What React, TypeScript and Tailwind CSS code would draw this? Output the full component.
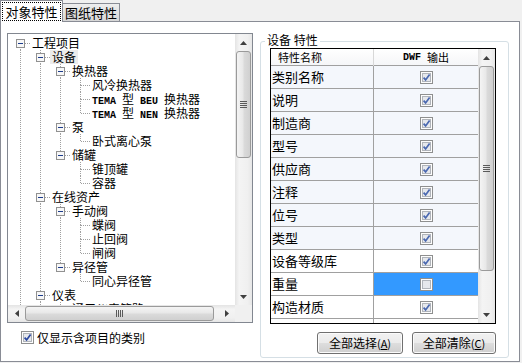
import type { ReactNode } from "react";
import clsx from "clsx";

type TreeNode = { label: ReactNode; children?: TreeNode[]; selected?: boolean };
type Row = { node: TreeNode; level: number; cont: boolean[]; last: boolean; top: boolean };

const Mono = ({ children }: { children: string }) => (
  <span className="whitespace-pre text-[10px] font-bold [font-family:'Liberation_Mono',monospace]">{children}</span>
);

const tree: TreeNode[] = [
  {
    label: "工程项目",
    children: [
      {
        label: "设备",
        selected: true,
        children: [
          {
            label: "换热器",
            children: [
              { label: "风冷换热器" },
              { label: <><Mono>TEMA </Mono>型<Mono> BEU </Mono>换热器</> },
              { label: <><Mono>TEMA </Mono>型<Mono> NEN </Mono>换热器</> },
            ],
          },
          { label: "泵", children: [{ label: "卧式离心泵" }] },
          { label: "储罐", children: [{ label: "锥顶罐" }, { label: "容器" }] },
        ],
      },
      {
        label: "在线资产",
        children: [
          { label: "手动阀", children: [{ label: "蝶阀" }, { label: "止回阀" }, { label: "闸阀" }] },
          { label: "异径管", children: [{ label: "同心异径管" }] },
        ],
      },
      { label: "仪表", children: [{ label: "通用仪表管路" }] },
      { label: "管道" },
    ],
  },
  { label: "图纸" },
];

function flatten(nodes: TreeNode[], level = 0, cont: boolean[] = [], out: Row[] = []) {
  nodes.forEach((node, i) => {
    const last = i === nodes.length - 1;
    out.push({ node, level, cont, last, top: !(level === 0 && i === 0) });
    if (node.children) flatten(node.children, level + 1, [...cont, !last], out);
  });
  return out;
}

// dotted connector lines + expander box for one tree row
function Lines({ row }: { row: Row }) {
  const w = 20 * (row.level + 1);
  const cx = 20 * row.level + 10.5;
  return (
    <svg width={w} height={14} className="shrink-0">
      <g stroke="#a0a0a0" strokeDasharray="1 1">
        {row.cont.map((c, a) => (c ? <line key={a} x1={20 * a + 10.5} y1={0} x2={20 * a + 10.5} y2={14} /> : null))}
        {row.top && <line x1={cx} y1={0} x2={cx} y2={7} />}
        {!row.last && <line x1={cx} y1={7} x2={cx} y2={14} />}
        <line x1={cx + 0.5} y1={7.5} x2={w} y2={7.5} />
      </g>
      {row.node.children && (
        <g>
          <rect x={cx - 4} y={3.5} width={8} height={8} fill="#f7f7f7" stroke="#919191" />
          <line x1={cx - 2.5} y1={7.5} x2={cx + 2.5} y2={7.5} stroke="#1c3c8c" />
        </g>
      )}
    </svg>
  );
}

function Check({ on = true, faded = false }: { on?: boolean; faded?: boolean }) {
  return (
    <svg width="13" height="13" viewBox="0 0 13 13" className="shrink-0">
      <rect x="0.5" y="0.5" width="12" height="12" fill="#fdfdfd" stroke="#8e8f8f" />
      <rect x="2.5" y="2.5" width="8" height="8" fill="#e6e8ec" stroke="#b0b4ba" />
      {on && (
        <path
          d="M3.6 6.6 L5.6 8.9 L9.6 3.4"
          fill="none"
          stroke={faded ? "#4a68b0" : "#2a47a0"}
          strokeWidth="1.7"
        />
      )}
    </svg>
  );
}

const ArrowUp = () => (
  <svg width="7" height="4"><path d="M3.5 0 L7 4 H0 Z" fill="#404040" /></svg>
);
const ArrowDown = () => (
  <svg width="7" height="4"><path d="M0 0 H7 L3.5 4 Z" fill="#404040" /></svg>
);
const ArrowLeft = () => (
  <svg width="4" height="7"><path d="M0 3.5 L4 0 V7 Z" fill="#404040" /></svg>
);
const ArrowRight = () => (
  <svg width="4" height="7"><path d="M0 0 L4 3.5 L0 7 Z" fill="#404040" /></svg>
);

const GripV = () => (
  <svg width="7" height="7">
    {[0, 2, 4, 6].map((y) => (
      <line key={y} x1={0} y1={y + 0.5} x2={7} y2={y + 0.5} stroke="#5a5a5a" />
    ))}
  </svg>
);
const GripH = () => (
  <svg width="7" height="7">
    {[0, 2, 4, 6].map((x) => (
      <line key={x} x1={x + 0.5} y1={0} x2={x + 0.5} y2={7} stroke="#5a5a5a" />
    ))}
  </svg>
);

function VScroll({ thumb }: { thumb: string }) {
  return (
    <div className="flex w-[17px] shrink-0 flex-col bg-[linear-gradient(90deg,#e4e4e4,#f4f4f4_25%,#f0f0f0_75%,#e6e6e6)]">
      <div className="flex h-[17px] items-center justify-center"><ArrowUp /></div>
      <div className="flex-1">
        <div className={clsx(thumb, "mx-px flex items-center justify-center rounded-[3px] border border-[#9a9a9a] bg-[linear-gradient(90deg,#f4f4f4,#e8e8e8_45%,#dadada_55%,#d0d0d0)]")}>
          <GripV />
        </div>
      </div>
      <div className="flex h-[17px] items-center justify-center"><ArrowDown /></div>
    </div>
  );
}

function HScroll() {
  return (
    <div className="flex h-[17px] flex-1 bg-[linear-gradient(#e4e4e4,#f4f4f4_25%,#f0f0f0_75%,#e6e6e6)]">
      <div className="flex w-[17px] items-center justify-center"><ArrowLeft /></div>
      <div className="flex-1">
        <div className="my-px flex h-[15px] w-[189px] items-center justify-center rounded-[3px] border border-[#9a9a9a] bg-[linear-gradient(#f4f4f4,#e8e8e8_45%,#dadada_55%,#d0d0d0)]">
          <GripH />
        </div>
      </div>
      <div className="flex w-[17px] items-center justify-center"><ArrowRight /></div>
    </div>
  );
}

const props = [
  { name: "类别名称", on: true, tint: true },
  { name: "说明", on: true, tint: true },
  { name: "制造商", on: true, tint: true },
  { name: "型号", on: true, tint: true },
  { name: "供应商", on: true, tint: true },
  { name: "注释", on: true, tint: true },
  { name: "位号", on: true, tint: true },
  { name: "类型", on: true, tint: true },
  { name: "设备等级库", on: true, tint: false },
  { name: "重量", on: false, tint: false, selected: true },
  { name: "构造材质", on: true, tint: false },
  { name: "标号", on: true, tint: false },
];

function Btn({ label, hot, w }: { label: string; hot: string; w: string }) {
  return (
    <button
      className={clsx(
        w,
        "flex h-[22px] items-center justify-center rounded-[3px] border border-[#707070] bg-[linear-gradient(#f2f2f2,#ebebeb_48%,#dddddd_52%,#cfcfcf)] text-[12px] leading-none shadow-[inset_0_0_0_1px_#fbfbfb]"
      )}
    >
      {label}
      <span className="text-[11px]">(<span className="underline">{hot}</span>)</span>
    </button>
  );
}

export default function App() {
  const rows = flatten(tree);

  return (
    <div className="flex h-[363px] w-[522px] flex-col bg-[#f0f0f0] text-black [font-family:'Noto_Sans_CJK_SC',sans-serif]">
      {/* Tabs */}
      <div className="relative z-10 -mb-px flex h-[22px] items-end">
        <div className="flex h-[22px] w-[63px] items-center justify-center border border-b-0 border-[#898c95] bg-white">
          <span className="px-[2px] text-[13px] leading-[17px] outline-1 outline-black outline-dotted">对象特性</span>
        </div>
        <div className="mb-px flex h-[18px] w-[57px] items-center justify-center border border-b-0 border-l-0 border-[#898c95] bg-[linear-gradient(#eeeeee,#e2e2e2_50%,#d6d6d6)] text-[13px] leading-none">
          图纸特性
        </div>
      </div>

      {/* Page */}
      <div className="flex h-[341px] w-[520px] items-start gap-[7px] border border-[#898c95] bg-white pl-[6px] pt-[11px]">
        {/* Category tree */}
        <div className="flex w-[246px] flex-col">
          <div className="flex h-[290px] flex-col border border-[#828790] bg-white">
            <div className="flex flex-1 overflow-hidden">
              <div className="flex-1 overflow-hidden pl-[2px] pt-[2px]">
                {rows.map((r, i) => (
                  <div key={i} className="flex h-[14px] items-center">
                    <Lines row={r} />
                    <span
                      className={clsx(
                        "h-[14px] whitespace-nowrap px-[2px] text-[12px] leading-[14px]",
                        r.node.selected && "bg-[#ebebeb]"
                      )}
                    >
                      {r.node.label}
                    </span>
                  </div>
                ))}
              </div>
              <VScroll thumb="h-[107px]" />
            </div>
            <div className="flex h-[17px]">
              <HScroll />
              <div className="w-[17px] bg-[#f0f0f0]" />
            </div>
          </div>
          <label className="mt-[8px] flex h-[13px] items-center gap-[3px] pl-[14px] text-[12px]">
            <Check />
            仅显示含项目的类别
          </label>
        </div>

        {/* Property group */}
        <fieldset className="w-[249px] rounded-[3px] border border-[#d5dfe5] pb-[3px] pl-[9px] pr-[12px]">
          <legend className="-ml-[5px] h-[16px] px-[2px] text-[12px] leading-[13px]">设备 特性</legend>
          <div className="-mt-px flex h-[276px] w-[226px] border border-black">
            <div className="flex w-[207px] flex-col overflow-hidden">
              <div className="grid h-[17px] shrink-0 grid-cols-[103px_104px] border-b border-[#a0a0a0] bg-[linear-gradient(#ffffff,#f5f6f8)] text-[11px]">
                <div className="flex items-center border-r border-[#d8d8d8] pl-[7px]">特性名称</div>
                <div className="flex items-center justify-center">
                  <Mono>DWF </Mono>输出
                </div>
              </div>
              {props.map((p) => (
                <div
                  key={p.name}
                  className={clsx(
                    "grid h-[23px] shrink-0 grid-cols-[103px_104px] border-b border-[#a0a0a0]",
                    p.tint ? "bg-[#f4f7fc]" : "bg-white"
                  )}
                >
                  <div className="flex items-center border-r border-[#a0a0a0] pl-px text-[13px]">{p.name}</div>
                  <div className={clsx("flex items-center justify-center", p.selected && "bg-[#3399ff]")}>
                    <Check on={p.on} faded />
                  </div>
                </div>
              ))}
            </div>
            <VScroll thumb="h-[205px]" />
          </div>
          <div className="mt-[8px] flex justify-end gap-[9px]">
            <Btn label="全部选择" hot="A" w="w-[86px]" />
            <Btn label="全部清除" hot="C" w="w-[84px]" />
          </div>
        </fieldset>
      </div>
    </div>
  );
}
